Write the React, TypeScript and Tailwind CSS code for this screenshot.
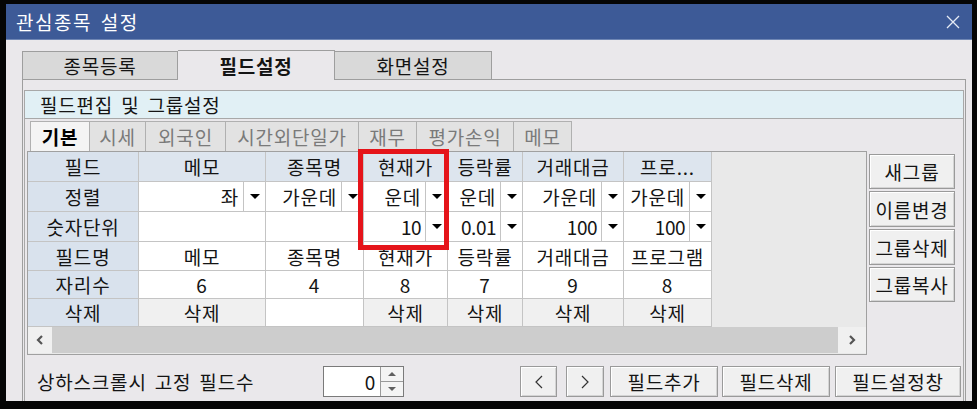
import React from "react";

const FONT = "font-['Noto_Sans_CJK_KR','Noto_Sans',sans-serif]";

function Tri({ up = false, size = 5, color = "black" }: { up?: boolean; size?: number; color?: string }) {
  return (
    <svg width={size * 2} height={size} viewBox={`0 0 ${size * 2} ${size}`}>
      {up ? (
        <polygon points={`0,${size} ${size * 2},${size} ${size},0`} fill={color} />
      ) : (
        <polygon points={`0,0 ${size * 2},0 ${size},${size}`} fill={color} />
      )}
    </svg>
  );
}

type Col = {
  w: number;
  head: string;
  align: string;
  unit: string | null;
  name: string;
  digits: string;
  del: boolean;
};

const cols: Col[] = [
  { w: 127, head: "메모", align: "좌", unit: null, name: "메모", digits: "6", del: true },
  { w: 98, head: "종목명", align: "가운데", unit: null, name: "종목명", digits: "4", del: false },
  { w: 84, head: "현재가", align: "운데", unit: "10", name: "현재가", digits: "8", del: true },
  { w: 75, head: "등락률", align: "운데", unit: "0.01", name: "등락률", digits: "7", del: true },
  { w: 101, head: "거래대금", align: "가운데", unit: "100", name: "거래대금", digits: "9", del: true },
  { w: 88, head: "프로...", align: "가운데", unit: "100", name: "프로그램", digits: "8", del: true },
];

const rowH = [30, 30, 30, 29, 28, 28];
const labels = ["필드", "정렬", "숫자단위", "필드명", "자리수", "삭제"];

function DropCell({ text, w, h, num = false }: { text: string; w: number; h: number; num?: boolean }) {
  return (
    <div className="flex bg-white border-r border-b border-[#c4c4c4]" style={{ width: w, height: h }}>
      <div className={`flex-1 flex justify-end items-center overflow-hidden whitespace-nowrap pr-[4px] ${num ? "tracking-[-0.5px]" : ""}`}>
        {text}
      </div>
      <div className="w-[22px] border-l border-[#c4c4c4] flex items-center justify-center">
        <Tri />
      </div>
    </div>
  );
}

function Cell({ children, w, h, bg }: { children?: React.ReactNode; w: number; h: number; bg: string }) {
  return (
    <div
      className={`flex items-center justify-center border-r border-b border-[#c4c4c4] whitespace-nowrap overflow-hidden ${bg}`}
      style={{ width: w, height: h }}
    >
      {children}
    </div>
  );
}

function Btn({ children, className = "" }: { children: React.ReactNode; className?: string }) {
  return (
    <div
      className={`flex items-center justify-center bg-[#f0f0f0] border border-[#9a9a9a] shadow-[inset_1px_1px_0_#ffffff,inset_-1px_-1px_0_#d4d4d4] ${className}`}
    >
      {children}
    </div>
  );
}

function Grid() {
  const labelW = 111;
  return (
    <div className="relative w-[840px] h-[204px] border border-[#a0a0a0] bg-[#e9e9e9] flex flex-col">
      <div className="flex">
        <div className="flex flex-col">
          {labels.map((l, i) => (
            <Cell key={l} w={labelW} h={rowH[i]} bg="bg-[#d9e2ed]">
              {l}
            </Cell>
          ))}
        </div>
        {cols.map((c) => (
          <div key={c.head} className="flex flex-col">
            <Cell w={c.w} h={rowH[0]} bg="bg-[#dde5ee]">
              {c.head}
            </Cell>
            <DropCell text={c.align} w={c.w} h={rowH[1]} />
            {c.unit ? (
              <DropCell text={c.unit} w={c.w} h={rowH[2]} num />
            ) : (
              <Cell w={c.w} h={rowH[2]} bg="bg-white" />
            )}
            <Cell w={c.w} h={rowH[3]} bg="bg-white">
              {c.name}
            </Cell>
            <Cell w={c.w} h={rowH[4]} bg="bg-white">
              {c.digits}
            </Cell>
            <Cell w={c.w} h={rowH[5]} bg={c.del ? "bg-[#f0f0f0]" : "bg-white"}>
              {c.del ? "삭제" : ""}
            </Cell>
          </div>
        ))}
      </div>
      {/* scrollbar */}
      <div className="flex h-[26px] mt-auto mb-[1px]">
        <div className="w-[24px] bg-[#f0f0f0] flex items-center justify-center">
          <svg width="10" height="12" viewBox="0 0 10 12">
            <polyline points="7,2 3,6 7,10" fill="none" stroke="#555" strokeWidth="2.2" />
          </svg>
        </div>
        <div className="flex-1 bg-[#cdcdcd]" />
        <div className="w-[28px] bg-[#f0f0f0] flex items-center justify-center">
          <svg width="10" height="12" viewBox="0 0 10 12">
            <polyline points="3,2 7,6 3,10" fill="none" stroke="#555" strokeWidth="2.2" />
          </svg>
        </div>
      </div>
      {/* highlight box */}
      <div className="absolute left-[330px] top-[-3px] w-[91px] h-[101px] border-[5px] border-[#e5141a]" />
    </div>
  );
}

export default function App() {
  const subtabs = [
    { t: "기본", w: 60, sel: true },
    { t: "시세", w: 57 },
    { t: "외국인", w: 81 },
    { t: "시간외단일가", w: 134 },
    { t: "재무", w: 59 },
    { t: "평가손익", w: 98 },
    { t: "메모", w: 59 },
  ];
  return (
    <div className={`w-[977px] h-[409px] bg-[#050505] pt-[4px] pl-[6px] overflow-hidden ${FONT} text-[19px] tracking-[0.8px] text-[#141414] leading-none`}>
      <div className="w-[966px] h-[397px] flex flex-col overflow-hidden">
        {/* title bar */}
        <div className="h-[36px] bg-[#3d5a97] flex items-center justify-between pl-[10px] pr-[12px] text-white border-b border-[#6f86b4]">
          <span className="text-[19px] tracking-[1.5px] [word-spacing:3px]">관심종목 설정</span>
          <svg width="14" height="14" viewBox="0 0 14 14">
            <path d="M1 1 L13 13 M13 1 L1 13" stroke="#e6ebf5" strokeWidth="1.3" />
          </svg>
        </div>
        {/* body */}
        <div className="flex-1 bg-[#eae8eb] pl-[16px] pt-[10px] overflow-hidden">
          {/* main tabs */}
          <div className="flex items-end h-[30px] w-[944px]">
            <div className="w-[156px] h-[29px] bg-[#d9d9d9] border border-[#9e9e9e] flex items-center justify-center">
              종목등록
            </div>
            <div className="w-[157px] h-[30px] bg-[#eae8eb] border-t border-r border-[#9e9e9e] flex items-center justify-center font-bold">
              필드설정
            </div>
            <div className="w-[157px] h-[29px] bg-[#d9d9d9] border border-l-0 border-[#9e9e9e] flex items-center justify-center">
              화면설정
            </div>
            <div className="flex-1 border-b border-[#9e9e9e]" />
          </div>
          {/* tab page */}
          <div className="w-[944px] h-[400px] border-l border-r border-[#9e9e9e] pt-[10px] pl-[1px]">
            <div className="w-[940px] h-[400px] border border-[#a8a8a8]">
              <div className="h-[28px] bg-[#e1f0f5] border-b border-[#a8a8a8] flex items-center pl-[15px] [word-spacing:3px]">
                필드편집 및 그룹설정
              </div>
              {/* sub tabs */}
              <div className="flex items-end h-[32px] pl-[5px] pr-[5px]">
                {subtabs.map((s) => (
                  <div
                    key={s.t}
                    className={`h-[30px] flex items-center justify-center border border-b-0 border-[#b0b0b0] -ml-px first:ml-0 ${
                      s.sel ? "bg-[#f4f4f4] font-bold text-black" : "bg-[#e2e2e2] text-[#7a7a7a]"
                    }`}
                    style={{ width: s.w }}
                  >
                    {s.t}
                  </div>
                ))}
              </div>
              {/* grid + side buttons */}
              <div className="flex pl-[2px]">
                <Grid />
                <div className="flex flex-col gap-[2px] ml-[2px] mt-[3px]">
                  <Btn className="w-[86px] h-[35px]">새그룹</Btn>
                  <Btn className="w-[86px] h-[36px]">이름변경</Btn>
                  <Btn className="w-[86px] h-[36px]">그룹삭제</Btn>
                  <Btn className="w-[86px] h-[35px]">그룹복사</Btn>
                </div>
              </div>
              {/* bottom row */}
              <div className="flex items-center mt-[11px] pl-[12px] h-[31px]">
                <div className="w-[286px] [word-spacing:3px]">상하스크롤시 고정 필드수</div>
                <div className="flex w-[81px] h-[31px] border border-[#7a7a7a] bg-white">
                  <div className="flex-1 flex items-center justify-end pr-[4px]">0</div>
                  <div className="w-[23px] flex flex-col border-l border-[#9a9a9a] bg-[#f4f4f4]">
                    <div className="flex-1 flex items-center justify-center border-b border-[#9a9a9a]">
                      <Tri up size={4} color="#606060" />
                    </div>
                    <div className="flex-1 flex items-center justify-center">
                      <Tri size={4} color="#606060" />
                    </div>
                  </div>
                </div>
                <Btn className="w-[37px] h-[31px] ml-[116px]">
                  <svg width="10" height="16" viewBox="0 0 10 16">
                    <polyline points="8,2 2,8 8,14" fill="none" stroke="#333" strokeWidth="1.2" />
                  </svg>
                </Btn>
                <Btn className="w-[38px] h-[31px] ml-[9px]">
                  <svg width="10" height="16" viewBox="0 0 10 16">
                    <polyline points="2,2 8,8 2,14" fill="none" stroke="#333" strokeWidth="1.2" />
                  </svg>
                </Btn>
                <Btn className="w-[108px] h-[31px] ml-[6px]">필드추가</Btn>
                <Btn className="w-[108px] h-[31px] ml-[4px]">필드삭제</Btn>
                <Btn className="w-[126px] h-[31px] ml-[5px]">필드설정창</Btn>
              </div>
            </div>
          </div>
        </div>
      </div>
    </div>
  );
}
